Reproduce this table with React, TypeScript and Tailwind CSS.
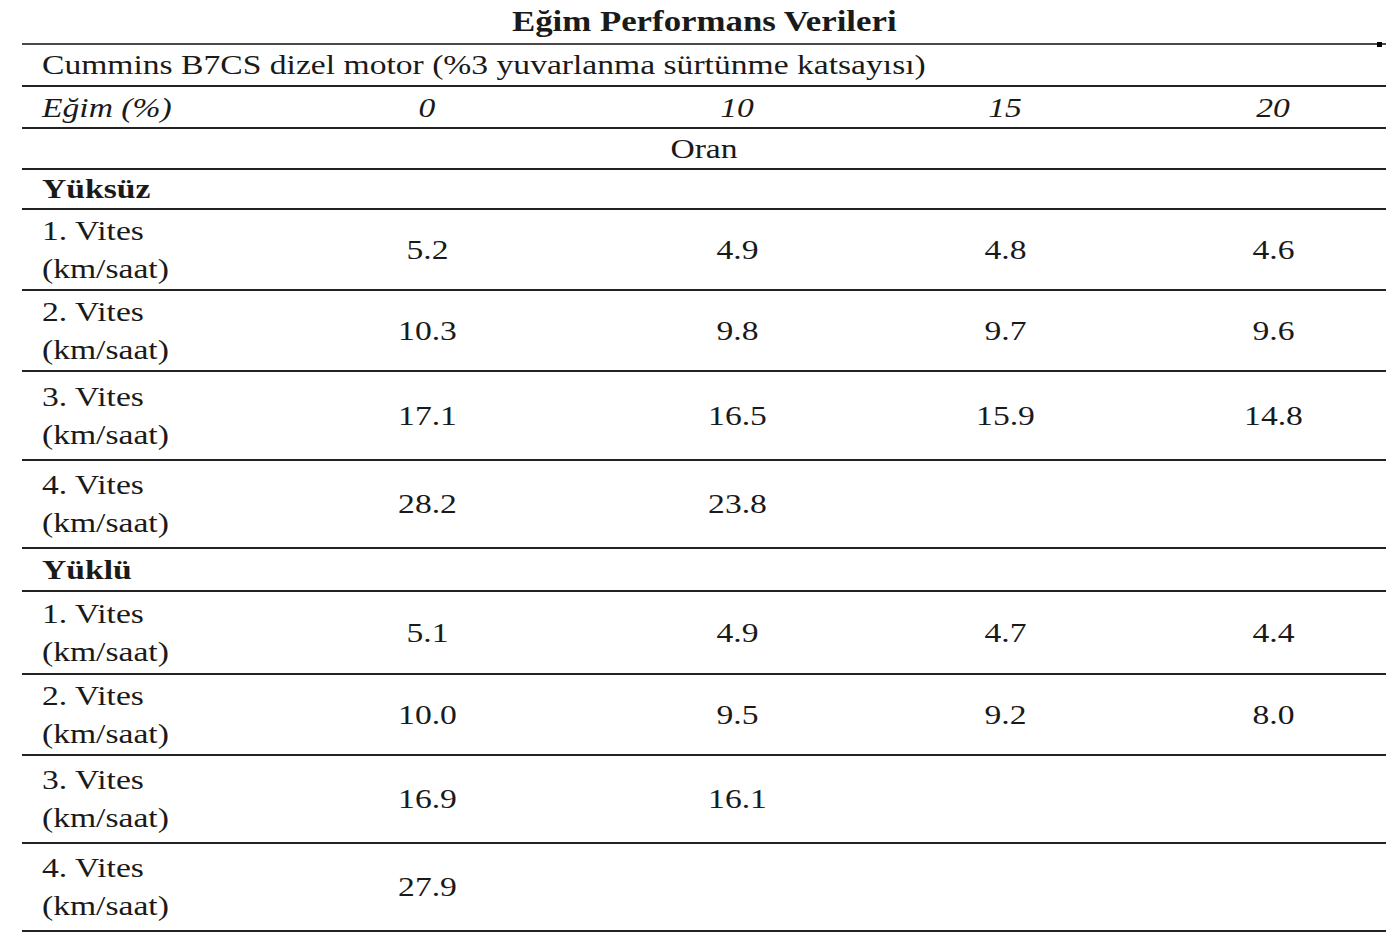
import React from "react";

// Eğim performans tablosu — Times görünümlü, yatayda hafif gerilmiş metin.

const cols = "grid grid-cols-[208px_394px_226px_310px_226px]";
const line = "border-b-2 border-[#232323]";

type Row = { label: string; h: string; vals: string[] };

const yuksuz: Row[] = [
  { label: "1. Vites", h: "h-[81px]", vals: ["5.2", "4.9", "4.8", "4.6"] },
  { label: "2. Vites", h: "h-[81px]", vals: ["10.3", "9.8", "9.7", "9.6"] },
  { label: "3. Vites", h: "h-[89px]", vals: ["17.1", "16.5", "15.9", "14.8"] },
  { label: "4. Vites", h: "h-[88px]", vals: ["28.2", "23.8", "", ""] },
];

const yuklu: Row[] = [
  { label: "1. Vites", h: "h-[83px]", vals: ["5.1", "4.9", "4.7", "4.4"] },
  { label: "2. Vites", h: "h-[81px]", vals: ["10.0", "9.5", "9.2", "8.0"] },
  { label: "3. Vites", h: "h-[88px]", vals: ["16.9", "16.1", "", ""] },
  { label: "4. Vites", h: "h-[88px]", vals: ["27.9", "", "", ""] },
];

// metni genişlet (kaynak görüntü yatayda ~%20 gerilmiş)
function L({ children, className = "" }: { children: React.ReactNode; className?: string }) {
  return <span className={`inline-block origin-left scale-x-[1.2] whitespace-nowrap ${className}`}>{children}</span>;
}
function C({ children, className = "" }: { children: React.ReactNode; className?: string }) {
  return <span className={`inline-block origin-center scale-x-[1.2] whitespace-nowrap ${className}`}>{children}</span>;
}

function DataRow({ r }: { r: Row }) {
  return (
    <div className={`${cols} ${r.h} ${line}`}>
      <div className="flex flex-col justify-center pl-[20px] leading-[38px]">
        <L>{r.label}</L>
        <L>(km/saat)</L>
      </div>
      {r.vals.map((v, i) => (
        <div key={i} className="flex items-center justify-center">
          {v ? <C>{v}</C> : null}
        </div>
      ))}
    </div>
  );
}

function Section({ title, h, rows }: { title: string; h: string; rows: Row[] }) {
  return (
    <>
      <div className={`flex items-center pl-[20px] ${h} ${line}`}>
        <L className="font-bold">{title}</L>
      </div>
      {rows.map((r) => (
        <DataRow key={r.label} r={r} />
      ))}
    </>
  );
}

export default function App() {
  return (
    <div className="h-[940px] w-[1400px] overflow-hidden bg-white font-['Liberation_Serif','Times_New_Roman',serif] text-[28px] text-[#1a1a1a]">
      <div className="ml-[22px] w-[1364px]">
        <div className="relative flex h-[45px] items-center justify-center border-b-2 border-[#4a4a4a]">
          <C className="text-[29px] font-bold">Eğim Performans Verileri</C>
          <span className="absolute right-[4px] bottom-[-4px] h-[5px] w-[5px] bg-black" />
        </div>
        <div className={`flex h-[42px] items-center pl-[20px] ${line}`}>
          <L>Cummins B7CS dizel motor (%3 yuvarlanma sürtünme katsayısı)</L>
        </div>
        <div className={`${cols} h-[42px] italic ${line}`}>
          <div className="flex items-center pl-[20px]">
            <L>Eğim (%)</L>
          </div>
          {["0", "10", "15", "20"].map((g) => (
            <div key={g} className="flex items-center justify-center">
              <C>{g}</C>
            </div>
          ))}
        </div>
        <div className={`flex h-[41px] items-center justify-center ${line}`}>
          <C>Oran</C>
        </div>
        <Section title="Yüksüz" h="h-[40px]" rows={yuksuz} />
        <Section title="Yüklü" h="h-[43px]" rows={yuklu} />
      </div>
    </div>
  );
}
